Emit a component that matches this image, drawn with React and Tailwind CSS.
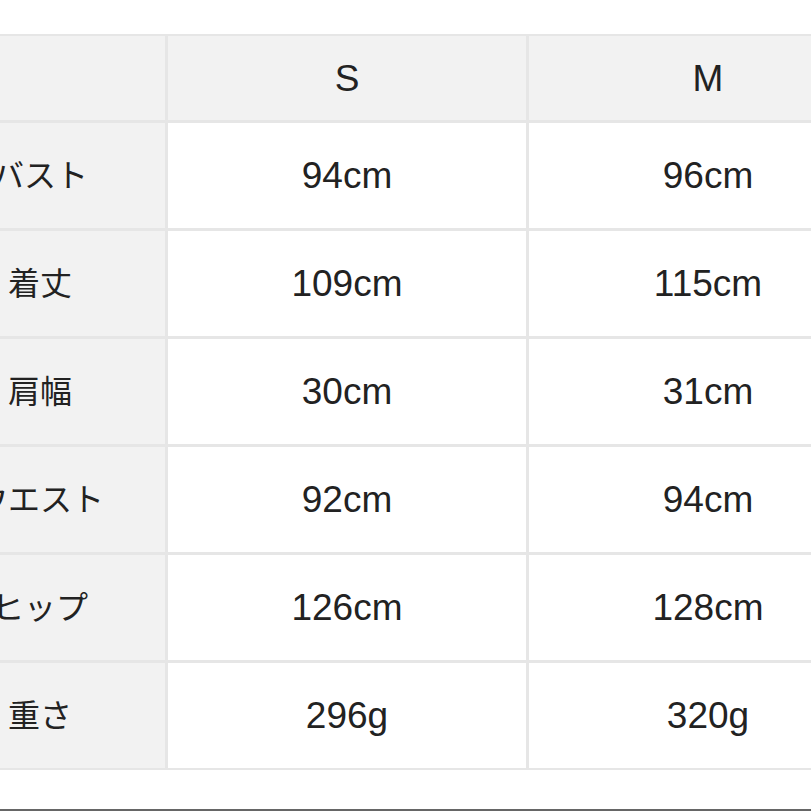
import React from "react";

const sizes = ["S", "M"];

const rows = [
  { label: "バスト", values: ["94cm", "96cm"] },
  { label: "着丈", values: ["109cm", "115cm"] },
  { label: "肩幅", values: ["30cm", "31cm"] },
  { label: "ウエスト", values: ["92cm", "94cm"] },
  { label: "ヒップ", values: ["126cm", "128cm"] },
  { label: "重さ", values: ["296g", "320g"] },
];

export default function App() {
  return (
    <div
      className="relative w-[811px] h-[811px] overflow-hidden bg-white text-[#222222]"
      style={{ fontFamily: '"Liberation Sans", "Noto Sans CJK JP", sans-serif' }}
    >
      <div className="pt-[34px] ml-[-87px]">
        <div className="grid grid-cols-[250px_358px_358px] gap-[3px] p-[2px] bg-[#e6e6e6] w-max text-[37px] leading-none">
          <div className="h-[84px] bg-[#f2f2f2]"></div>
          {sizes.map((s) => (
            <div key={s} className="h-[84px] bg-[#f2f2f2] flex items-center justify-center">
              {s}
            </div>
          ))}
          {rows.map((r) => (
            <React.Fragment key={r.label}>
              <div className="h-[105px] bg-[#f2f2f2] flex items-center justify-center text-[32px]">
                {r.label}
              </div>
              {r.values.map((v, i) => (
                <div key={i} className="h-[105px] bg-white flex items-center justify-center">
                  {v}
                </div>
              ))}
            </React.Fragment>
          ))}
        </div>
      </div>
      <div className="absolute left-0 right-0 bottom-0 h-[2px] bg-[#666666]"></div>
    </div>
  );
}
